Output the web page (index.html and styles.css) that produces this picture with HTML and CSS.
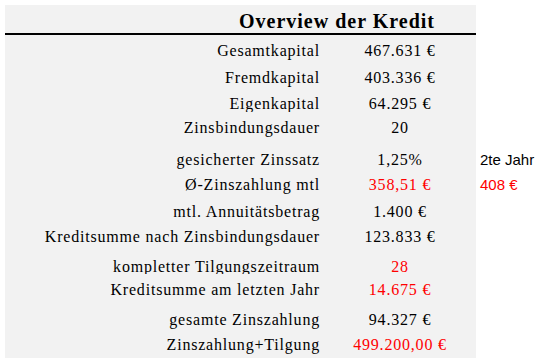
FILE: index.html
```html
<!DOCTYPE html>
<html lang="de">
<head>
<meta charset="utf-8">
<title>Overview der Kredit</title>
<link rel="stylesheet" href="styles.css">
</head>
<body>
<div class="sheet">
  <div class="title">Overview der Kredit</div>
  <div class="side"></div>

  <div class="label">Gesamtkapital</div><div class="value">467.631 €</div><div class="side"></div>
  <div class="label">Fremdkapital</div><div class="value">403.336 €</div><div class="side"></div>
  <div class="label">Eigenkapital</div><div class="value">64.295 €</div><div class="side"></div>
  <div class="label">Zinsbindungsdauer</div><div class="value">20</div><div class="side"></div>
  <div class="label">gesicherter Zinssatz</div><div class="value">1,25%</div><div class="side">2te Jahr</div>
  <div class="label">Ø-Zinszahlung mtl</div><div class="value red">358,51 €</div><div class="side red">408 €</div>
  <div class="label">mtl. Annuitätsbetrag</div><div class="value">1.400 €</div><div class="side"></div>
  <div class="label">Kreditsumme nach Zinsbindungsdauer</div><div class="value">123.833 €</div><div class="side"></div>
  <div class="label">kompletter Tilgungszeitraum</div><div class="value red">28</div><div class="side"></div>
  <div class="label">Kreditsumme am letzten Jahr</div><div class="value red">14.675 €</div><div class="side"></div>
  <div class="label">gesamte Zinszahlung</div><div class="value">94.327 €</div><div class="side"></div>
  <div class="label">Zinszahlung+Tilgung</div><div class="value red">499.200,00 €</div><div class="side"></div>
</div>
</body>
</html>
```

FILE: styles.css
```css
html, body {
  margin: 0;
  padding: 0;
  background: #ffffff;
  overflow: hidden;
}

.sheet {
  display: grid;
  grid-template-columns: 340px 131px 60px;
  grid-template-rows: 30px 27px 26px 24px 32px 25px 27px 25px 30px 23px 30px 25px 30px;
  padding: 5px 0 0 5px;
  font-family: "Liberation Serif", "Times New Roman", serif;
  font-size: 16px;
  line-height: 16px;
  letter-spacing: 0.8px;
  color: #000000;
}

.title {
  grid-column: 1 / 3;
  background: #f2f2f2;
  border-bottom: 2px solid #000000;
  text-align: right;
  padding: 6px 41px 0 0;
  font-size: 20px;
  line-height: 20px;
  font-weight: bold;
  letter-spacing: 1px;
  box-sizing: border-box;
}

.label {
  background: #f2f2f2;
  text-align: right;
  padding: 8px 25px 0 0;
  white-space: nowrap;
}

.value {
  background: #f2f2f2;
  text-align: center;
  padding: 8px 21px 0 0;
  white-space: nowrap;
}

.side {
  padding: 8px 0 0 4px;
  font-family: "Liberation Sans", Arial, sans-serif;
  font-size: 15px;
  letter-spacing: 0;
  white-space: nowrap;
}

.red {
  color: #ff0000;
}
```
